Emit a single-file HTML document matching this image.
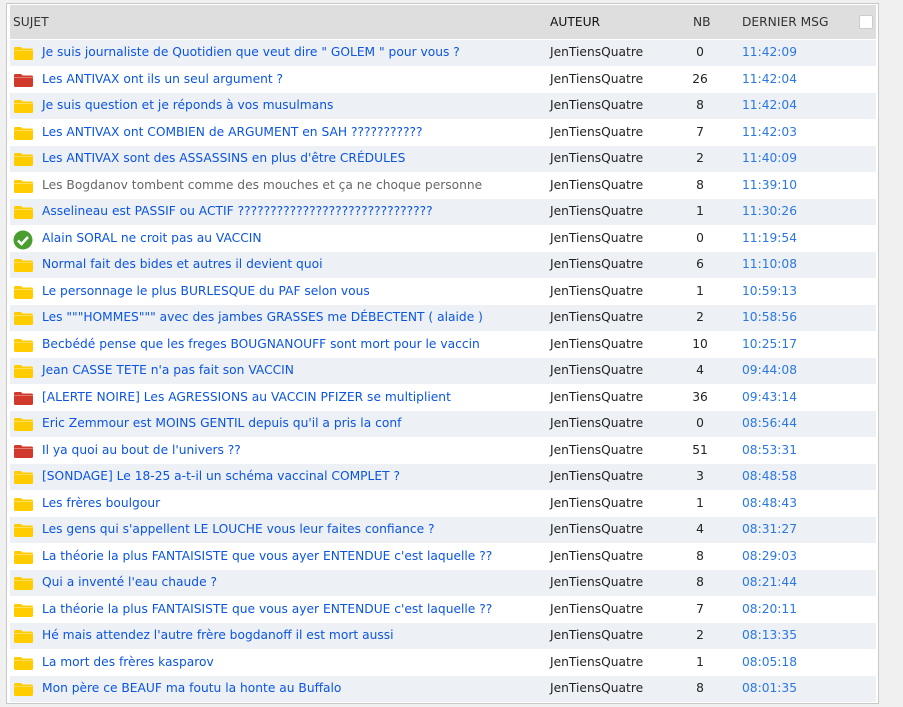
<!DOCTYPE html>
<html><head><meta charset="utf-8"><style>
body{margin:0;width:903px;height:707px;background:#f0f0f0;font-family:"DejaVu Sans","Liberation Sans",sans-serif;font-size:12.25px;overflow:hidden;position:relative}
#box{position:absolute;left:6px;top:3px;width:871px;height:699px;background:#fff;border:1px solid #c8c8c8}
#hd{position:absolute;left:3px;top:1px;width:866px;height:34px;background:#dedede;color:#333}
.h{position:absolute;top:10px}
.r{position:absolute;left:3px;width:866px;height:26px}
.r.o{background:#edf0f5}
.ic{position:absolute;left:4px;top:7px}
.t{position:absolute;left:32px;top:5px;color:#0b55e0;white-space:nowrap}
.a{position:absolute;left:540px;top:5px;color:#222}
.n{position:absolute;left:670px;width:40px;text-align:center;top:5px;color:#222}
.d{position:absolute;left:732px;top:5px;color:#2a78e0}
.cb{position:absolute;left:849px;top:10px;width:12px;height:12px;background:#fff;border:1px solid #ccc;border-radius:2px}
</style></head><body>
<div id="box">
<div id="hd"><span class="h" style="left:3px">SUJET</span><span class="h" style="left:540px;color:#111">AUTEUR</span><span class="h" style="left:683px">NB</span><span class="h" style="left:732px">DERNIER MSG</span><div class="cb"></div></div>
<div id="rows"></div>
</div>
<script>
var d=[["y","Je suis journaliste de Quotidien que veut dire \" GOLEM \" pour vous ?",0,"11:42:09"],
["r","Les ANTIVAX ont ils un seul argument ?",26,"11:42:04"],
["y","Je suis question et je réponds à vos musulmans",8,"11:42:04"],
["y","Les ANTIVAX ont COMBIEN de ARGUMENT en SAH ???????????",7,"11:42:03"],
["y","Les ANTIVAX sont des ASSASSINS en plus d'être CRÉDULES",2,"11:40:09"],
["g","Les Bogdanov tombent comme des mouches et ça ne choque personne",8,"11:39:10"],
["y","Asselineau est PASSIF ou ACTIF ??????????????????????????????",1,"11:30:26"],
["c","Alain SORAL ne croit pas au VACCIN",0,"11:19:54"],
["y","Normal fait des bides et autres il devient quoi",6,"11:10:08"],
["y","Le personnage le plus BURLESQUE du PAF selon vous",1,"10:59:13"],
["y","Les \"\"\"HOMMES\"\"\" avec des jambes GRASSES me DÉBECTENT ( alaide )",2,"10:58:56"],
["y","Becbédé pense que les freges BOUGNANOUFF sont mort pour le vaccin",10,"10:25:17"],
["y","Jean CASSE TETE n'a pas fait son VACCIN",4,"09:44:08"],
["r","[ALERTE NOIRE] Les AGRESSIONS au VACCIN PFIZER se multiplient",36,"09:43:14"],
["y","Eric Zemmour est MOINS GENTIL depuis qu'il a pris la conf",0,"08:56:44"],
["r","Il ya quoi au bout de l'univers ??",51,"08:53:31"],
["y","[SONDAGE] Le 18-25 a-t-il un schéma vaccinal COMPLET ?",3,"08:48:58"],
["y","Les frères boulgour",1,"08:48:43"],
["y","Les gens qui s'appellent LE LOUCHE vous leur faites confiance ?",4,"08:31:27"],
["y","La théorie la plus FANTAISISTE que vous ayer ENTENDUE c'est laquelle ??",8,"08:29:03"],
["y","Qui a inventé l'eau chaude ?",8,"08:21:44"],
["y","La théorie la plus FANTAISISTE que vous ayer ENTENDUE c'est laquelle ??",7,"08:20:11"],
["y","Hé mais attendez l'autre frère bogdanoff il est mort aussi",2,"08:13:35"],
["y","La mort des frères kasparov",1,"08:05:18"],
["y","Mon père ce BEAUF ma foutu la honte au Buffalo",8,"08:01:35"]];
var h="";
function fold(c){return '<svg class="ic" width="19" height="13" viewBox="0 0 19 13"><path d="M0 1.5Q0 0 1.5 0H7L8.5 1.5H17.5Q19 1.5 19 3V11.5Q19 13 17.5 13H1.5Q0 13 0 11.5Z" fill="'+c+'"/><rect x="0" y="3" width="19" height="1" fill="rgba(255,255,255,.35)"/></svg>';}
d.forEach(function(r,i){
var top=36+i*26.5;
var ic=r[0]=="r"?fold("#d0392b"):r[0]=="c"?'<svg class="ic" style="top:4px;left:3px" width="20" height="20" viewBox="0 0 20 20"><circle cx="10" cy="10" r="9.5" fill="#4a9e2f"/><path d="M5 10.5L8.5 14L15 7" stroke="#fff" stroke-width="2.6" fill="none"/></svg>':fold("#ffcc00");
h+='<div class="r'+(i%2==0?' o':'')+'" style="top:'+top+'px">'+ic+'<span class="t"'+(r[0]=="g"?' style="color:#666"':'')+'>'+r[1].replace(/</g,"&lt;")+'</span><span class="a">JenTiensQuatre</span><span class="n">'+r[2]+'</span><span class="d">'+r[3]+'</span></div>';
});
document.getElementById("rows").innerHTML=h;
</script>
</body></html>
